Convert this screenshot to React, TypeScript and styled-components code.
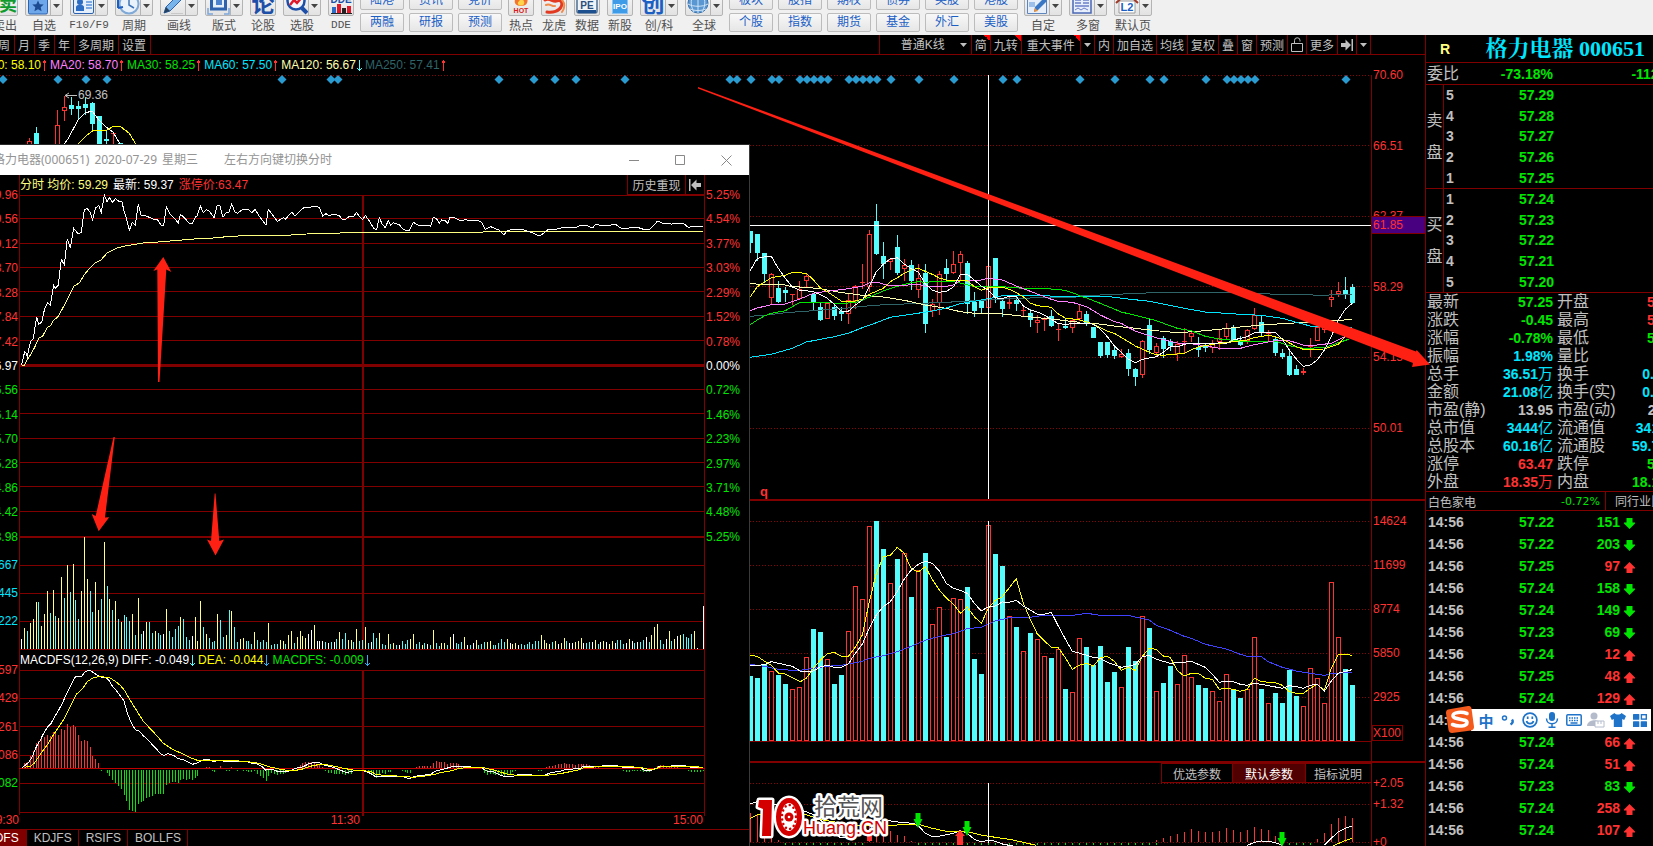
import React from "react";
import styled, { createGlobalStyle, css } from "styled-components";

const C = {
  bg: "#000000",
  line: "#800000",
  text: "#c0c0c0",
  red: "#ff3232",
  green: "#00e600",
  cyan: "#00e6ff",
  bar: "#54fcfc",
  pale: "#ffff80",
  yellow: "#ffff00",
  white: "#ffffff",
  pink: "#ff80ff",
  cream: "#ffffb0",
  teal: "#2f6468",
  mark: "#ff2014",
};

const GlobalStyle = createGlobalStyle`
  * { box-sizing: border-box; }
  body {
    margin: 0;
    background: ${C.bg};
    font-family: "Liberation Sans", "Noto Sans CJK SC", sans-serif;
    font-size: 12px;
    color: ${C.text};
  }
  button, select { font: inherit; color: inherit; background: none; border: 0; padding: 0; margin: 0; }
  a { color: inherit; text-decoration: none; }
  svg { display: block; }
`;

/* ---------- page frame ---------- */

const Page = styled.div`
  position: relative;
  display: flex;
  flex-direction: column;
  min-height: 100vh;
  overflow: hidden;
`;

const Body = styled.div`
  display: flex;
  flex: 1;
`;

const Main = styled.main`
  position: relative;
  display: flex;
  flex-direction: column;
  flex: 1;
  min-width: 0;
  overflow: hidden;
`;

/* ---------- top toolbar ---------- */

const Toolbar = styled.header`
  display: flex;
  align-items: flex-end;
  gap: 7px;
  height: 35px;
  padding-bottom: 1px;
  background: #f0f0f0;
  overflow: hidden;
`;

const Tool = styled.div<{ $cut?: boolean }>`
  display: flex;
  flex-direction: column;
  align-items: center;
  flex: none;
  margin-left: ${(p) => (p.$cut ? "-8px" : "0")};
`;

const ToolKeys = styled.div`
  display: flex;
  height: 26px;
  border: 1px solid #b4b4b4;
  border-radius: 2px;
  background: linear-gradient(#fafafa, #e2e2e2);
`;

const ToolKey = styled.button`
  width: 24px;
  height: 24px;
`;

const ToolMore = styled.button`
  display: flex;
  align-items: center;
  justify-content: center;
  width: 12px;
  padding-top: 6px;
  border-left: 1px solid #b4b4b4;
`;

const ToolLabel = styled.span<{ $latin?: boolean }>`
  height: 18px;
  margin: 0 -2px;
  line-height: 18px;
  font-size: ${(p) => (p.$latin ? "11px" : "12px")};
  font-family: ${(p) => (p.$latin ? '"Liberation Mono", monospace' : '"Noto Sans CJK SC", sans-serif')};
  color: #505050;
  white-space: nowrap;
`;

const KeyGrid = styled.div<{ $cols: number }>`
  display: grid;
  grid-template-columns: repeat(${(p) => p.$cols}, 44px);
  grid-auto-rows: 19px;
  gap: 3px 5px;
  margin: 0 -1px 2px;
  flex: none;
`;

const GridKey = styled.button`
  border: 1px solid #bcbcbc;
  border-radius: 2px;
  background: linear-gradient(#f8f8f8, #e6e6e6);
  color: #1c5fc4;
  font-size: 12px;
  line-height: 17px;
`;

/* ---------- period / option row ---------- */

const MenuRow = styled.nav`
  display: flex;
  justify-content: space-between;
  flex: none;
  height: 20px;
  border-bottom: 1px solid ${C.line};
  padding-right: 54px;
`;

const MenuSide = styled.div<{ $cut?: boolean }>`
  display: flex;
  margin-left: ${(p) => (p.$cut ? "-6px" : "0")};
  border-left: 1px solid ${C.line};
`;

const MenuKey = styled.button<{ $flag?: boolean; $pad?: string }>`
  display: flex;
  align-items: center;
  justify-content: center;
  padding: ${(p) => p.$pad ?? "0 3px"};
  border-right: 1px solid ${C.line};
  white-space: nowrap;
  ${(p) =>
    p.$flag &&
    css`
      background: linear-gradient(45deg, transparent 50%, #ff0000 50%) top right / 6px 6px no-repeat;
    `}
`;

const LinePicker = styled.label`
  display: flex;
  align-items: center;
  justify-content: flex-end;
  gap: 14px;
  width: 92px;
  padding-right: 4px;
  border-right: 1px solid ${C.line};
`;

const PlainSelect = styled.select`
  appearance: none;
  outline: none;
`;

/* ---------- legends ---------- */

const Legend = styled.div<{ $cut?: boolean }>`
  display: flex;
  align-items: center;
  flex: none;
  gap: 3px;
  height: 20px;
  padding-left: ${(p) => (p.$cut ? "0" : "60px")};
  margin-left: ${(p) => (p.$cut ? "-27px" : "0")};
  white-space: nowrap;
`;

const LegendItem = styled.span<{ $c: string }>`
  display: flex;
  align-items: center;
  gap: 1px;
  color: ${(p) => p.$c};
`;

/* ---------- chart panes ---------- */

const Pane = styled.section<{ $h: number; $rule?: boolean }>`
  display: flex;
  flex: none;
  height: ${(p) => p.$h}px;
  border-top: ${(p) => (p.$rule ? `2px solid ${C.line}` : "0")};
`;

const Plot = styled.div<{ $h: number }>`
  flex: 1;
  min-width: 0;
  border-right: 1px solid ${C.line};
  svg.plot { width: 100%; height: ${(p) => p.$h}px; }
`;

const Axis = styled.div`
  position: relative;
  display: flex;
  flex-direction: column;
  width: 53px;
  flex: none;
`;

const Ticks = styled.div<{ $h: number; $top?: number; $right?: boolean }>`
  display: flex;
  flex-direction: column;
  justify-content: space-between;
  align-items: ${(p) => (p.$right ? "flex-end" : "flex-start")};
  height: ${(p) => p.$h}px;
  margin-top: ${(p) => p.$top ?? -8}px;
  padding: 0 1px;
  flex: none;
`;

const Tick = styled.span<{ $c?: string }>`
  line-height: 16px;
  color: ${(p) => p.$c ?? C.red};
`;

const Cursor = styled.div`
  position: absolute;
  top: 141px;
  left: 0;
  right: 0;
  height: 18px;
  padding-left: 1px;
  line-height: 16px;
  border: 1px solid ${C.line};
  border-width: 1px 0;
  background: #480080;
  color: ${C.red};
`;

const Unit = styled.span`
  width: 31px;
  margin-top: 20px;
  border: 1px solid ${C.line};
  line-height: 14px;
  color: ${C.red};
`;

const ParamTabs = styled.div`
  display: flex;
  justify-content: flex-end;
  height: 20px;
`;

const ParamTab = styled.button<{ $on?: boolean }>`
  padding: 0 ${(p) => (p.$on ? 12 : 11)}px;
  border: 1px solid ${C.line};
  border-right-width: 0;
  background: ${(p) => (p.$on ? "#500000" : "transparent")};
  color: ${(p) => (p.$on ? C.white : C.text)};
  &:last-child { padding: 0 9px 0 8px; }
`;

/* ---------- floating intraday window ---------- */

const Popup = styled.section`
  position: absolute;
  top: 109px;
  bottom: 0;
  left: -40px;
  width: 790px;
  display: flex;
  flex-direction: column;
  border-top: 1px solid #2a2a2a;
  border-right: 1px solid #3a3a3a;
  background: ${C.bg};
  overflow: hidden;
`;

const TitleBar = styled.div`
  display: flex;
  flex: none;
  height: 30px;
  padding-left: 33px;
  background: #ffffff;
  color: #949494;
  font-family: "Noto Sans", "Noto Sans CJK SC", sans-serif;
  line-height: 30px;
`;

const TitleWord = styled.span`
  margin-right: 5px;
`;

const TitleHint = styled.span`
  margin-left: 21px;
  flex: 1;
`;

const WinKey = styled.button`
  display: flex;
  align-items: center;
  justify-content: center;
  width: 46px;
`;

const InfoRow = styled.div`
  display: flex;
  flex: none;
  height: 20px;
  padding: 0 44px 0 59px;
`;

const InfoText = styled.div`
  display: flex;
  gap: 5px;
  flex: 1;
  border-left: 1px solid ${C.line};
  line-height: 20px;
`;

const Tone = styled.span<{ $c: string }>`
  color: ${(p) => p.$c};
`;

const InfoKey = styled.button<{ $w: number }>`
  display: flex;
  align-items: center;
  justify-content: center;
  width: ${(p) => p.$w}px;
  border: 1px solid ${C.line};
  border-width: 0 0 1px 1px;
  &:last-child { border-right-width: 1px; }
`;

const Trio = styled.div<{ $h: number }>`
  display: grid;
  grid-template-columns: 59px 1fr 44px;
  height: ${(p) => p.$h}px;
  flex: none;
  svg.plot { width: 100%; height: ${(p) => p.$h}px; overflow: visible; }
`;

const Hours = styled.div`
  display: grid;
  grid-template-columns: 59px 341px 1fr;
  justify-items: end;
  flex: none;
  height: 17px;
  padding-right: 46px;
  line-height: 17px;
  color: ${C.red};
`;

const IndexTabs = styled.div`
  display: flex;
  flex: none;
  height: 17px;
  border-top: 1px solid ${C.line};
`;

const IndexTab = styled.button<{ $on?: boolean }>`
  padding: 0 6px 0 7px;
  height: 16px;
  line-height: 16px;
  border-right: 1px solid ${C.line};
  background: ${(p) => (p.$on ? C.line : "transparent")};
  color: ${(p) => (p.$on ? C.white : C.text)};
  &:first-child { padding: 0 7px 0 8px; }
`;

/* ---------- quote sidebar ---------- */

const Side = styled.aside`
  display: flex;
  flex-direction: column;
  flex: none;
  width: 228px;
  border-left: 1px solid ${C.line};
  overflow: hidden;
`;

const SideHead = styled.div`
  display: flex;
  align-items: center;
  flex: none;
  height: 27px;
  padding: 0 8px 0 14px;
  font-size: 14px;
  font-weight: bold;
  color: ${C.pale};
`;

const StockName = styled.h1`
  flex: 1;
  margin: 0;
  text-align: right;
  white-space: nowrap;
  font: bold 22px/22px "Liberation Serif", "Noto Serif CJK SC", "Noto Sans CJK SC", serif;
  color: ${C.cyan};
`;

const Figure = styled.span<{ $c?: string }>`
  font-size: 14px;
  font-weight: bold;
  text-align: right;
  color: ${(p) => p.$c ?? C.text};
`;

const Unitary = styled.span`
  font-size: 15px;
  font-weight: normal;
`;

const StatGrid = styled.div<{ $row: number }>`
  display: grid;
  grid-template-columns: 72px 54px 77px 52px;
  grid-auto-rows: ${(p) => p.$row}px;
  align-items: center;
  flex: none;
  width: 256px;
  padding-left: 1px;
  border-top: 1px solid ${C.line};
  font-size: 16px;
  line-height: 18px;
  white-space: nowrap;
`;

const StatName = styled.span<{ $second?: boolean }>`
  padding-left: ${(p) => (p.$second ? "4px" : "0")};
`;

const Book = styled.div`
  display: flex;
  flex: none;
  height: 104px;
  border-top: 1px solid ${C.line};
`;

const BookSide = styled.div`
  display: flex;
  flex-direction: column;
  align-items: center;
  justify-content: center;
  gap: 14px;
  width: 18px;
  border-right: 1px solid ${C.line};
  font-size: 16px;
  line-height: 18px;
`;

const BookRows = styled.div`
  display: grid;
  grid-template-rows: repeat(5, 1fr);
  align-items: center;
  width: 110px;
  padding-left: 2px;
`;

const BookRow = styled.div`
  display: flex;
  justify-content: space-between;
`;

const Sector = styled.div`
  display: flex;
  align-items: center;
  justify-content: space-between;
  flex: none;
  height: 20px;
  padding-left: 2px;
  border-top: 1px solid ${C.line};
  border-bottom: 1px solid ${C.line};
  white-space: nowrap;
`;

const SectorMove = styled.span`
  font-family: "DejaVu Sans", sans-serif;
  font-size: 11px;
  margin-left: auto;
  margin-right: 5px;
  color: ${C.green};
`;

const SectorPeers = styled.a`
  align-self: stretch;
  width: 48px;
  padding-left: 9px;
  border-left: 1px solid ${C.line};
  line-height: 20px;
  overflow: hidden;
`;

const DealTable = styled.table`
  width: 209px;
  table-layout: fixed;
  border-collapse: collapse;
  font-size: 14px;
  font-weight: bold;
  td { height: 22px; padding: 0; line-height: 16px; text-align: right; }
  td:first-child { padding-left: 2px; text-align: left; }
  svg { margin: 2px 0 0 auto; }
`;

/* ---------- input method bar ---------- */

const ImeBar = styled.div`
  position: absolute;
  right: 2px;
  bottom: 115px;
  display: flex;
  align-items: center;
  width: 180px;
  height: 22px;
  padding-left: 4px;
  background: #ffffff;
`;

const ImeLogo = styled.div`
  position: absolute;
  left: -26px;
  top: -4px;
`;

const ImeKey = styled.button`
  display: flex;
  align-items: center;
  justify-content: center;
  width: 22px;
  height: 22px;
  color: #1f73c8;
  font-size: 15px;
  font-weight: bold;
`;

const Overlay = styled.svg`
  position: absolute;
  top: 0;
  left: 0;
  pointer-events: none;
`;

const Watermark = styled.svg`
  position: absolute;
  left: 754px;
  bottom: 3px;
`;

/* ---------- chart helpers ---------- */

/* Series are stored in thirds of a pixel from an origin. */
const seg = (ox: number, oy: number, raw: string) =>
  raw
    .trim()
    .split(/\s+/)
    .map((p) => {
      const [x, y] = p.split(",").map(Number);
      return `${(ox + x / 3).toFixed(1)},${(oy + y / 3).toFixed(1)}`;
    })
    .join(" ");

const Line = ({ c, pts }: { c: string; pts: string }) => (
  <polyline points={pts} fill="none" stroke={c} strokeWidth="1" shapeRendering="crispEdges" />
);

const toneOf: Record<string, string> = { y: C.pale, c: C.bar, w: C.white, r: C.red, g: C.green };

const Sticks = ({ ox, oy, base, raw, tone }: { ox: number; oy: number; base: number; raw: string; tone?: string }) => (
  <g shapeRendering="crispEdges">
    {raw
      .trim()
      .split(/\s+/)
      .map((s, i) => {
        const k = tone ?? s[0];
        const [x, y] = (tone ? s : s.slice(1)).split(",").map(Number);
        const end = Math.round(oy + y / 3);
        const top = Math.min(end, base);
        return (
          <rect key={i} x={Math.floor(ox + x / 3)} y={top} width="1" height={Math.max(1, Math.abs(base - end))} fill={toneOf[k]} />
        );
      })}
  </g>
);

const Dots = ({ ys, w }: { ys: number[]; w: number }) => (
  <g stroke="#900000" strokeDasharray="1 2" shapeRendering="crispEdges">
    {ys.map((y) => (
      <line key={y} x1="0" x2={w} y1={y + 0.5} y2={y + 0.5} />
    ))}
  </g>
);

/* ---------- data: daily candles (kind high,top,bottom,low,volume) ---------- */

const CANDLES = `
c123,123,159,189,528 c132,132,189,213,534 c189,189,252,276,492 r250,252,324,346,513 c273,294,336,339,525
c291,300,309,336,552 r312,312,315,345,567 r273,297,327,327,561 r252,258,273,291,471 c309,312,339,360,387
c336,351,390,393,396 r336,339,387,387,477 c339,351,378,390,552 c352,363,373,393,525 r309,330,372,402,393
r285,288,333,357,258 r222,276,279,297,297 r120,132,291,306,78 c42,93,192,195,63 c156,198,222,267,147
r204,207,216,240,249 c135,171,249,255,177 r207,225,237,273,159 c210,225,273,300,291 r222,264,300,324,210
c222,249,402,429,159 r327,342,363,381,372 r243,252,339,375,321 c207,234,252,276,411 r183,222,249,252,294
r183,192,219,273,297 c213,219,342,372,261 c306,336,363,381,477 c327,330,354,372,522 r198,228,354,354,75
c204,204,324,339,162 c330,333,357,381,198 r318,336,342,357,348 c318,330,342,363,381 r345,360,363,378,453
c357,369,390,411,399 r375,390,399,429,417 r381,387,390,423,468 c360,378,408,411,474 r400,417,420,453,447
c384,408,414,417,567 r387,390,414,429,576 r345,363,387,393,414 c363,372,402,408,441 c411,411,444,444,495
c456,456,498,504,438 c456,456,495,504,546 c471,480,498,507,516 r477,492,502,504,561 c477,489,537,558,441
c534,537,561,588,483 r450,453,555,564,348 c387,405,480,492,384 r459,468,489,501,573 c438,444,477,504,549
c447,453,468,483,498 r453,462,492,513,552 r414,454,457,492,465 r423,429,441,456,531 c441,471,480,501,555
c462,468,474,486,564 r450,459,474,489,573 r417,444,456,480,603 r399,414,441,450,522 c405,412,453,453,567
c438,453,465,468,594 r417,420,453,462,567 r354,375,417,420,411 c378,396,429,441,567 r420,429,432,453,609
c441,447,489,498,579 c477,489,501,507,609 c480,498,555,558,510 c525,537,555,555,588 r534,543,549,555,618
r444,468,471,501,504 r408,411,453,453,534 r400,405,420,430,609 r300,321,330,351,246 r276,303,312,321,411
c261,300,312,327,507 c282,291,339,342,555`
  .trim()
  .split(/\s+/)
  .map((s, i) => {
    const [h, t, b, l, v] = s.slice(1).split(",").map(Number);
    const y = (n: number) => Math.round(190 + n / 3);
    return { up: s[0] === "r", x: 748 + 7 * i, h: y(h), t: y(t), b: y(b), l: y(l), v: Math.round(500 + v / 3) };
  });

const EARLY = [
  [1, 27, 138, 141, 150, 150], [0, 34, 127, 133, 150, 150], [1, 55, 110, 125, 150, 150], [1, 62, 96, 107, 111, 121],
  [0, 69, 97, 105, 109, 115], [0, 76, 101, 106, 109, 119], [0, 83, 97, 104, 108, 115], [0, 90, 102, 103, 124, 130],
  [0, 97, 116, 116, 150, 150], [0, 104, 130, 139, 141, 150], [1, 111, 132, 133, 134, 150], [0, 118, 143, 143, 150, 150],
].map(([up, x, h, t, b, l]) => ({ up: !!up, x, h, t, b, l, v: 0 }));

const Candle = ({ d }: { d: (typeof CANDLES)[number] }) => {
  const tone = d.up ? C.red : C.bar;
  if (!d.up)
    return (
      <g fill={tone}>
        <rect x={d.x + 2} y={d.h} width="1" height={d.l - d.h} />
        <rect x={d.x} y={d.t} width="5" height={Math.max(1, d.b - d.t)} />
      </g>
    );
  return (
    <g>
      <rect x={d.x + 2} y={d.h} width="1" height={Math.max(0, d.t - d.h)} fill={tone} />
      <rect x={d.x + 2} y={d.b} width="1" height={Math.max(0, d.l - d.b)} fill={tone} />
      {d.b - d.t <= 2 ? (
        <rect x={d.x} y={d.t} width="5" height={d.b - d.t} fill={tone} />
      ) : (
        <rect x={d.x + 0.5} y={d.t + 0.5} width="4" height={d.b - d.t - 1} fill="none" stroke={tone} />
      )}
    </g>
  );
};

const DIAMONDS = [
  3, 58, 86, 107, 282, 331, 338, 499, 534, 555, 576, 625, 730, 737, 751, 772, 779, 800, 807, 814, 821, 828, 849, 856, 863, 870,
  877, 891, 919, 954, 1003, 1017, 1080, 1115, 1150, 1164, 1206, 1227, 1234, 1241, 1248, 1255, 1346,
];

const L = (a: string, b: string, oy = 190) => seg(740, oy, a) + " " + seg(1080, oy, b);

const AVERAGES = [
  [C.teal, L("29,379 80,375 136,368 220,362 325,354 400,346 493,342 619,337 724,331 830,325 1010,321", "0,318 60,315 220,308 380,307 500,310 600,313 740,316 760,313 816,314")],
  [C.cream, L("29,280 64,284 130,284 157,290 199,292 241,296 300,307 367,316 430,321 493,331 556,345 619,355 661,365 703,370 790,372 850,379 934,387 1010,396", "0,399 40,400 103,408 166,415 229,422 292,428 355,424 418,418 481,411 544,405 607,401 691,396 780,391 816,388")],
  [C.cyan, L("29,502 94,493 157,475 199,456 283,440 325,430 367,413 409,398 451,382 514,373 577,363 619,354 661,341 724,330 766,322 787,317 892,317 1010,320", "0,320 80,319 145,327 208,334 313,355 376,366 481,373 544,376 607,385 649,397 691,408 730,411 816,412")],
  [C.green, L("29,405 52,390 73,378 94,370 136,362 178,338 220,337 304,340 346,338 367,331 409,312 430,303 472,289 514,278 535,275 556,277 598,274 640,275 661,279 703,290 745,289 787,290 850,295 934,297 976,301 1010,313", "0,318 20,324 61,340 124,366 187,381 229,392 292,415 334,422 376,439 418,447 481,453 586,453 628,467 670,475 733,473 775,458 806,448")],
  [C.pink, L("29,362 52,354 94,344 136,342 178,328 220,310 262,304 325,296 367,289 388,279 409,276 451,288 493,286 535,283 556,289 619,289 640,285 661,272 724,270 745,265 787,270 829,288 892,312 934,328 955,334 997,337", "0,344 20,350 61,375 103,395 124,400 145,412 166,423 187,430 208,437 250,449 292,459 334,461 376,467 418,475 481,475 523,464 565,456 586,452 628,452 670,465 712,465 754,460 775,449 796,440")],
  [C.yellow, L("29,323 52,290 73,277 94,263 136,256 157,247 199,250 220,269 241,294 262,305 304,333 346,333 367,328 388,313 430,295 451,275 472,263 493,250 514,239 535,235 556,244 577,253 598,264 619,270 661,270 682,272 703,290 724,301 745,293 787,291 808,298 829,308 850,320 871,339 892,347 934,352 955,372 976,384", "0,390 40,402 82,423 103,430 145,455 166,468 208,487 229,494 250,496 292,492 313,490 334,479 355,471 397,463 460,455 502,450 523,443 565,436 586,440 607,447 649,470 670,478 733,477 775,463 796,440")],
  [C.white, L("29,245 52,205 73,201 94,199 115,235 136,265 157,291 178,300 220,305 241,314 262,325 283,343 304,363 325,364 346,345 367,330 388,290 409,245 430,223 451,207 472,203 493,222 514,236 535,246 556,282 577,300 598,307 619,304 640,291 661,254 682,253 703,270 724,288 745,301 766,323 787,326 808,319 829,319 850,348 871,360 892,366 913,375 934,388 955,401 976,403", "0,399 20,399 40,403 61,417 82,440 103,468 124,487 145,507 166,518 187,508 229,500 250,487 271,470 292,471 313,463 334,460 397,462 418,458 439,460 460,450 502,440 523,428 586,427 607,447 628,480 649,507 670,529 691,525 712,510 733,480 754,440 775,390 796,358 817,340")],
];

const VOLUME_LINES = [
  ["#4040ff", L("29,493 73,499 115,508 157,511 181,511 220,505 262,499 304,496 346,488 367,484 388,475 430,467 472,455 514,439 556,421 598,409 640,401 682,386 724,382 766,363 808,353 871,352 913,346 1000,346", "0,343 20,340 61,346 145,346 166,351 208,360 229,376 271,391 313,409 334,415 376,433 439,447 481,463 502,469 544,470 565,485 607,502 649,513 691,520 733,526 754,521 815,517", 500)],
  [C.yellow, L("29,466 52,469 73,483 94,496 115,519 136,522 157,533 181,545 199,535 220,505 241,480 262,461 283,457 304,469 325,469 346,442 367,405 388,305 409,220 430,170 451,166 472,142 493,160 514,207 535,216 556,200 577,238 598,270 619,294 640,312 661,340 682,321 703,350 724,370 745,325 766,301 787,290 808,263 829,236 850,309 871,358 892,402 913,423 934,441 955,443 976,473 997,508 1018,496", "0,495 20,490 40,498 61,474 82,469 103,484 124,511 145,502 166,511 187,469 208,445 229,448 250,468 271,472 292,512 313,528 334,520 355,520 376,535 397,538 418,568 439,565 460,568 481,574 502,568 523,535 544,545 586,548 607,556 628,575 649,580 670,580 691,565 712,553 733,572 754,505 775,463 796,463 815,466", 500)],
  [C.white, L("29,498 73,494 94,485 157,499 181,513 220,513 241,501 262,496 283,502 304,502 325,492 346,460 367,433 388,385 409,345 430,320 451,305 472,274 493,237 514,210 535,193 556,184 577,190 598,213 619,250 640,265 661,271 682,280 703,310 724,333 745,320 766,318 787,306 808,307 829,301 850,318 871,330 892,343 913,343 934,337 955,378 976,417 997,454", "0,460 20,466 40,472 61,475 82,487 124,502 145,499 166,493 187,470 208,466 229,478 271,490 313,487 334,484 355,493 376,502 397,523 418,547 439,543 460,545 481,553 502,556 523,550 544,553 607,565 628,557 649,560 670,565 691,556 712,553 733,574 754,543 775,520 796,514 815,509", 500)],
];

/* ---------- data: intraday window ---------- */

const PRICE =
  seg(0, 170, "65,585 68,570 74,545 78,550 82,560 88,530 92,514 100,506 105,470 110,442 116,463 125,457 134,415 143,398 151,406 157,370 161,346 166,355 175,346 184,268 193,284 202,206 211,233 221,175 235,192 244,187 253,119 262,115 270,127 278,149 286,115 296,106 304,127 313,76 321,95 328,82 338,98 346,85 358,95 366,95 371,119 379,145 388,181 397,157 406,166 415,103 424,138 436,137 448,142 460,148 472,148 484,167 491,165 499,110 510,132 525,147 535,160 541,133 550,140 568,160 577,160 586,142 592,137 601,108 610,128 619,119 628,123 642,143 652,105 660,108 669,142 678,128 686,128 695,103 705,126 712,130 727,119 746,119 755,128 765,118 780,142 798,166 805,118 818,135 832,154 842,148 850,143 856,148 865,138 876,126 884,137 892,132 905,117 915,112 950,110 958,112 968,138 978,131 986,137 1002,133 1018,137 1028,149 1036,149 1048,139 1062,138 1069,127 1077,138 1088,149 1096,136 1106,150 1122,176 1130,178 1138,142") +
  " " +
  seg(370, 140, "28,233 37,253 46,263 55,241 62,255 70,248 88,254 98,267 107,271 118,271 124,260 130,247 145,256 178,256 182,259 190,232 200,237 208,250 215,240 226,242 233,250 240,232 250,232 262,238 274,243 286,238 298,243 322,241 335,247 345,268 362,260 374,265 386,270 402,284 412,272 426,268 456,268 474,274 490,279 502,286 512,286 525,276 535,268 550,270 566,266 582,262 616,264 630,257 654,258 668,264 676,253 690,256 724,255 738,254 750,263 764,266 790,262 806,263 820,268 838,270 850,257 862,244 872,247 882,252 895,250 905,253 912,250 940,250 955,262 970,259 998,259");

const MEAN =
  seg(0, 170, "65,586 74,585 80,572 92,553 104,532 116,505 128,498 142,473 152,466 160,452 176,438 185,420 196,400 206,380 221,349 238,339 252,315 266,298 286,279 304,269 322,248 352,234 380,227 430,219 488,215 545,210 595,206 640,204 680,200 730,197 860,196 920,192 1000,190 1070,187 1140,187") +
  " " +
  seg(370, 140, "338,277 340,274 998,274");

const TRADES_A = "w65,417 y74,384 c83,393 y92,369 y101,357 y110,306 c116,306 y125,378 y134,342 y143,273 c152,339 y161,270 c167,348 y176,354 y185,231 c194,294 y203,195 c212,276 y221,192 c227,300 c236,357 y245,273 y254,111 y263,237 c272,273 c278,336 y287,246 y296,330 c305,297 y314,126 c323,258 y329,297 c338,330 y347,303 c356,357 y365,366 c374,345 c380,351 c389,363 y398,342 c407,405 y416,294 c425,402 w431,393 y440,366 c449,366 c458,399 y467,393 c476,399 c482,405 w491,402 y500,327 c509,393 c518,411 c527,387 c536,378 y542,351 c551,357 c560,411 c569,420 w578,408 y587,351 y593,423 y602,303 c611,381 y620,402 c629,414 c638,426 c644,423 y653,342 c662,360 c671,411 y680,405 c689,330 y695,333 c704,381 c713,426 y722,417 y731,414 c740,423 c746,423 c755,432 y764,396 c773,420 c782,426 c791,420 c800,426 y806,369 c815,435 c824,432 c833,432 y842,420 y851,423 c857,432 y866,405 y875,393 c884,429 y893,411 y902,393 y908,408 y917,414 w926,402 w935,390 y944,375 w953,423 w959,423 w968,423 c977,426 w986,429 c995,426 w1004,426 c1010,417 y1019,396 c1028,417 c1037,399 y1046,420 y1055,420 c1061,426 y1070,387 c1079,423 c1088,420 y1097,381 c1106,429 w1115,426 c1121,399 c1130,414 y1139,399";
const TRADES_B = "c10,339 c19,354 y28,339 c37,372 c46,375 y55,342 c61,372 y70,369 c79,375 w88,375 c97,363 c106,372 c112,360 y121,357 y130,342 c139,372 c148,366 y157,375 c163,369 w172,372 c181,375 y190,330 c199,369 c208,378 y214,369 y223,369 c232,375 y241,351 w250,342 c259,369 c265,372 c274,366 y283,351 w292,375 c301,375 w310,369 y319,360 c325,375 c334,372 c343,366 y352,366 y361,363 c370,375 c376,375 c385,369 c394,357 c403,366 y412,357 w421,369 y427,372 y436,369 w445,375 c454,372 c463,375 c472,372 c478,366 c487,372 c496,363 c505,363 y514,345 y523,360 y529,369 y538,372 c547,366 y556,363 w565,372 y574,369 y583,354 c589,363 w598,369 w607,369 y616,366 y625,363 y634,354 w640,369 c649,369 c658,366 w667,366 y676,360 c685,372 w691,366 y700,363 w709,366 y718,372 y727,363 w736,369 c742,360 c751,360 c760,372 w769,369 y778,357 w787,363 c793,369 w802,366 c811,366 c820,360 w829,351 c838,366 y844,345 y853,321 y862,312 c871,360 c880,372 w889,357 y898,333 c904,363 y913,357 w922,348 y931,345 c940,342 c949,351 c955,354 c964,342 y973,333 w982,384 w1000,258";

const DIFF =
  seg(0, 500, "65,803 74,797 86,787 95,773 100,762 110,738 120,722 130,702 142,682 152,672 165,648 176,630 188,608 200,580 212,556 224,532 232,529 246,528 254,517 266,511 272,512 280,518 292,525 304,531 318,534 326,540 338,560 350,573 364,592 372,602 376,618 384,645 394,668 406,689 416,692 430,707 446,722 462,740 472,750 484,763 492,766 504,761 522,767 534,776 550,779 565,786 577,793 590,790 610,779 628,779 643,785 654,781 668,783 700,783 716,785 740,785 754,789 770,791 786,800 797,810 818,808 834,815 860,816 875,810 893,803 910,800 925,792 945,786 960,789 975,796 1000,802 1018,809 1040,818 1062,812 1090,812 1105,817 1125,828") +
  " " +
  seg(370, 520, "12,768 30,769 46,771 70,768 100,770 118,776 130,771 150,766 180,764 195,754 220,748 245,740 290,739 310,742 335,744 350,753 372,756 390,765 402,769 430,769 440,765 480,764 505,768 520,767 540,759 572,753 590,748 630,746 640,739 690,741 700,737 740,737 760,742 812,744 824,751 845,751 860,744 868,739 895,740 910,736 945,737 965,742 998,742");
const DEA =
  seg(0, 500, "74,802 92,799 104,788 115,772 130,750 144,732 160,705 176,681 190,660 208,626 220,601 230,582 248,565 262,545 280,533 296,530 312,531 330,534 345,543 362,557 374,572 386,593 400,616 415,640 430,664 446,681 466,702 490,730 516,747 544,760 566,771 592,781 650,781 700,781 716,783 760,787 784,792 806,800 828,805 845,809 880,812 905,808 930,799 960,793 985,795 1010,800 1030,805 1060,810 1090,812 1115,815") +
  " " +
  seg(370, 520, "15,762 40,766 100,769 130,772 165,768 190,764 210,758 240,753 265,746 300,741 340,743 375,751 410,762 440,766 530,766 570,761 600,755 625,750 645,742 700,740 770,739 815,743 835,748 855,747 870,741 930,739 980,740 998,743");

const HOT_A = "74,790 83,786 92,768 101,752 110,729 116,722 125,718 134,711 143,705 152,708 161,696 167,699 176,705 185,688 194,690 203,672 212,681 221,675 227,681 236,705 245,723 254,720 263,723 272,741 278,768 287,777 296,789 620,801 629,801 662,798 695,801 893,800 902,795 908,790 917,787 926,786 935,786 944,788 953,792 959,796 968,800";
const HOT_B = "139,742 148,738 157,738 163,738 172,738 181,738 190,729 199,723 208,726 214,726 223,726 232,732 241,729 250,729 259,729 265,732 274,738 283,738 292,739 301,741 529,741 538,738 547,738 556,735 565,732 574,732 583,729 589,732 598,732 607,732 616,735 625,732 634,732 640,732 649,732 658,735 667,738 676,738 685,739 862,738 871,736 880,736 889,738 898,738 904,738 913,739 922,741";
const COLD_A = "305,813 323,819 329,828 338,840 347,849 356,858 365,867 374,885 380,903 389,930 398,933 407,936 416,912 425,906 431,903 440,894 449,891 458,888 467,882 476,882 482,882 491,882 500,855 509,849 518,846 527,846 536,849 542,840 551,837 560,840 569,837 578,840 587,834 593,828 638,813 644,816 680,813 689,813 713,813 731,813 740,813 746,816 755,816 764,813 773,822 782,828 791,834 800,843 806,828 815,819 824,822 833,825 842,822 851,822 857,819 866,813 977,813 986,819 995,820 1004,822 1010,823 1019,822 1028,823 1037,825 1046,822 1055,822 1070,813 1079,813 1097,813 1106,819 1115,822 1121,825 1130,833";
const COLD_B = "10,768 19,774 28,765 37,759 46,762 55,756 61,756 97,753 106,756 112,759 121,759 343,759 352,765 361,762 370,762 376,765 385,766 394,768 403,771 412,762 421,762 427,756 436,753 505,753 514,753 760,754 769,756 778,756 787,753 793,753 802,753 811,753 820,756 829,756 838,756 844,753 955,753 964,755 973,755 982,755 991,755 1000,753";

const PRICE_GRID = [218, 243, 267, 291, 316, 340, 389, 413, 438, 462, 486, 511, 565, 593, 621, 649];
const LEFT_PRICES = ["59.96", "59.56", "59.12", "58.70", "58.28", "57.84", "57.42", "56.97", "56.56", "56.14", "55.70", "55.28", "54.86", "54.42", "53.98"];
const RIGHT_RATES = ["5.25%", "4.54%", "3.77%", "3.03%", "2.29%", "1.52%", "0.78%", "0.00%", "0.72%", "1.46%", "2.23%", "2.97%", "3.71%", "4.48%", "5.25%"];
const tickTone = (i: number) => (i < 7 ? C.red : i === 7 ? C.white : C.green);

/* ---------- small drawings ---------- */

const Caret = ({ c = C.text }: { c?: string }) => (
  <svg width="7" height="4" viewBox="0 0 7 4">
    <path d="M0 0h7L3.500 4z" fill={c} />
  </svg>
);

const Trend = ({ up, blue }: { up?: boolean; blue?: boolean }) => (
  <svg width="5" height="13" viewBox="0 0 5 13" shapeRendering="crispEdges" stroke={up ? C.red : blue ? "#30b0f0" : C.bar} fill="none">
    <path d={up ? "M2.500 12V1M.5 4.500l2-3 2 3" : "M2.500 1v11M.5 9.500l2 2 2-2"} />
  </svg>
);

const DealArrow = ({ up }: { up: boolean }) => (
  <svg width="11" height="11" viewBox="0 0 11 11">
    <path d={up ? "M5.500 0L11 5.500v1H8.500V11h-6V6.500H0v-1z" : "M2.500 0h6v4.500H11v1L5.500 11 0 5.500v-1h2.500z"} fill={up ? C.red : C.green} />
  </svg>
);

const LockIcon = () => (
  <svg width="12" height="15" viewBox="0 0 12 15" fill="none" stroke={C.text}>
    <path d="M.5 6.500h11v8H.5zM3.500 6.500v-3a2.500 2.500 0 0 1 5.500 0v1" />
  </svg>
);

const JumpIcon = ({ back }: { back?: boolean }) => (
  <svg width="12" height="12" viewBox="0 0 12 12" fill={C.text} transform={back ? "scale(-1 1)" : undefined}>
    <path d="M0 4h4.500V.5L10 6l-5.500 5.500V8H0zM10.500 0H12v12h-1.500z" />
  </svg>
);

const iconText = { fontWeight: 700, textAnchor: "middle" as const };

const icons: Record<string, React.ReactNode> = {
  sell: <text x="15" y="20" fontSize="18" fill="#0f9a2c" {...iconText}>卖</text>,
  star: (
    <>
      <rect x="2.500" y="0" width="19" height="23" rx="1.500" fill="#6fa8ea" stroke="#2c62ae" />
      <rect x="4" y="1" width="16" height="6" fill="#a5cbf6" />
      <path d="M12 9.500l1.700 3.700 4 .4-3 2.700.9 4L12 18.200l-3.600 2.100.9-4-3-2.700 4-.4z" fill="#1c4b92" />
    </>
  ),
  card: (
    <>
      <rect x="2.500" y="2" width="20" height="20.500" rx="1.500" fill="#e4effb" stroke="#2c62ae" />
      <path d="M5 20v-4c0-3 8-3 8 0v4z" fill="#2b6cc4" />
      <circle cx="9" cy="11" r="3" fill="#2b6cc4" />
      <path d="M15 11h6M15 14h6M15 17h6" stroke="#5a93da" strokeWidth="1.500" />
    </>
  ),
  clock: (
    <>
      <circle cx="13" cy="13" r="9.500" fill="#e9f2fb" stroke="#7fa9d6" strokeWidth="2" />
      <path d="M13 6v8l5 3" fill="none" stroke="#3c74b8" strokeWidth="1.500" />
      <path d="M2 8v9M2 17l5-1" fill="none" stroke="#1c5fc4" strokeWidth="2" />
    </>
  ),
  pencil: (
    <>
      <path d="M3 22l2-6L18 3l4 4L9 20z" fill="#78b4ea" stroke="#2c62ae" />
      <path d="M3 22l2-6 4 4z" fill="#24405e" />
      <path d="M10 22.500h12" stroke="#c8c8c8" />
    </>
  ),
  screen: (
    <>
      <rect x="5.500" y="2" width="14" height="16" fill="#e6f0fb" stroke="#2c62ae" strokeWidth="3" />
      <rect x="10" y="8" width="6" height="6" fill="#4c83cc" />
      <path d="M2 17v6h5M23 17v6h-5" fill="none" stroke="#7da6dc" strokeWidth="1.500" />
    </>
  ),
  talk: <text x="12" y="21" fontSize="23" fill="#1d4fa8" {...iconText}>论</text>,
  pick: (
    <>
      <circle cx="12" cy="10" r="8.500" fill="#f2f6fc" stroke="#1d4fa8" strokeWidth="2.500" />
      <path d="M18 17l5 5" stroke="#1d4fa8" strokeWidth="4" />
      <path d="M6 14l4-5 3 3 5-6" fill="none" stroke="#e0182a" strokeWidth="2.500" />
    </>
  ),
  dde: (
    <>
      <text x="12" y="12" fontSize="10" fill="#1d4fa8" {...iconText}>DDE</text>
      <path d="M3 16h4v6H3z" fill="#2b6cc4" />
      <path d="M8 13h4v9H8zM18 15h4v7h-4z" fill="#e0182a" />
      <path d="M13 17h4v5h-4z" fill="#222" />
      <path d="M2 22.500h21" stroke="#222" />
    </>
  ),
  hot: (
    <>
      <path d="M12 1c4 4 8 6 6 11-1 4-11 4-12 0-1-3 1-5 2-7 1 1 2 1 2 3 2-2 2-4 2-7z" fill="#f4742c" />
      <path d="M12 7c2 2 4 3 3 6-1 2-5 2-6 0s2-3 3-6z" fill="#ffd34c" />
      <text x="12" y="22" fontSize="7" fill="#d81c1c" {...iconText}>HOT</text>
    </>
  ),
  dragon: (
    <g fill="none" strokeLinecap="round">
      <path d="M3 9c5-3 8 3 12 1s6 2 4 6-8 6-14 5" stroke="#e23a22" strokeWidth="3" />
      <path d="M4 14c4-2 6 2 9 1M20 9c3 3 3 8 0 12" stroke="#f08a4a" strokeWidth="2" />
    </g>
  ),
  pe: (
    <>
      <rect x="2" y="2" width="20" height="20" rx="2" fill="#eef3f8" stroke="#4f6f92" strokeWidth="1.500" />
      <path d="M3 20.500h18" stroke="#1e4f8e" strokeWidth="3" />
      <text x="12" y="18" fontSize="10" fill="#2d4f7c" {...iconText}>PE</text>
    </>
  ),
  ipo: (
    <>
      <rect x="4.500" y="2" width="15" height="20.500" fill="#3d9be8" stroke="#8cc3f2" />
      <text x="12" y="18" fontSize="8" fill="#ffffff" {...iconText}>IPO</text>
    </>
  ),
  create: <text x="12" y="21" fontSize="23" fill="#1c5fc4" {...iconText}>创</text>,
  globe: (
    <>
      <circle cx="12" cy="12" r="10" fill="#5a96d2" stroke="#3a72ac" />
      <path d="M2 13c5 3 15 3 20 0M4 18c5 2 11 2 16 0M12 2v20M7 4c-3 6-2 12 1 17M17 4c3 6 2 12-1 17" fill="none" stroke="#cfe4f6" />
    </>
  ),
  edit: (
    <>
      <path d="M2.500 2h19v20.500h-19z" fill="#e6effa" stroke="#5d86bd" />
      <path d="M4 11h6v5H4zM4 4h6v5H4z" fill="#9dc0ea" />
      <path d="M9 21l1-5L19 7l3 3-9 9z" fill="#3a78c6" />
      <path d="M9 21l1-4 3 3z" fill="#f09030" />
    </>
  ),
  windows: (
    <>
      <rect x="3" y="1" width="18" height="21" fill="#e8effc" stroke="#4a67b4" strokeWidth="1.500" />
      <path d="M5 9h6M13 9h6M5 12h6M13 12h6M5 15h14" stroke="#6b7fc8" strokeWidth="1.500" />
      <path d="M5 19l3-2 3 2 3-2 4 2" fill="none" stroke="#6b7fc8" />
    </>
  ),
  home: (
    <>
      <path d="M4 10h16v12H4z" fill="#ffffff" stroke="#9a9a9a" />
      <path d="M1 12L12 2l11 10" fill="none" stroke="#a03828" strokeWidth="2" />
      <text x="12" y="20" fontSize="11" fill="#1c5fc4" {...iconText}>L2</text>
    </>
  ),
};

type ToolSpec = { icon: string; label: string; more?: boolean; latin?: boolean; cut?: boolean };

const ToolItem = ({ icon, label, more, latin, cut }: ToolSpec) => (
  <Tool $cut={cut}>
    <ToolKeys>
      <ToolKey aria-label={label}>
        <svg width="24" height="24" viewBox="0 0 24 24">{icons[icon]}</svg>
      </ToolKey>
      {more && (
        <ToolMore aria-label={label + "选项"}>
          <Caret c="#444" />
        </ToolMore>
      )}
    </ToolKeys>
    <ToolLabel $latin={latin}>{label}</ToolLabel>
  </Tool>
);

const TOOLS_A: ToolSpec[] = [
  { icon: "sell", label: "卖出", cut: true },
  { icon: "star", label: "自选", more: true },
  { icon: "card", label: "F10/F9", more: true, latin: true },
  { icon: "clock", label: "周期", more: true },
  { icon: "pencil", label: "画线", more: true },
  { icon: "screen", label: "版式", more: true },
  { icon: "talk", label: "论股" },
  { icon: "pick", label: "选股", more: true },
  { icon: "dde", label: "DDE", latin: true },
];
const TOOLS_B: ToolSpec[] = [
  { icon: "hot", label: "热点" },
  { icon: "dragon", label: "龙虎" },
  { icon: "pe", label: "数据" },
  { icon: "ipo", label: "新股" },
  { icon: "create", label: "创/科", more: true },
  { icon: "globe", label: "全球", more: true },
];
const TOOLS_C: ToolSpec[] = [
  { icon: "edit", label: "自定", more: true },
  { icon: "windows", label: "多窗", more: true },
  { icon: "home", label: "默认页", more: true },
];
const KEYS_A = ["陆港", "资讯", "竞价", "两融", "研报", "预测"];
const KEYS_B = ["板块", "股指", "期权", "债券", "英股", "港股", "个股", "指数", "期货", "基金", "外汇", "美股"];

/* ---------- sections ---------- */

const TopToolbar = () => (
  <Toolbar>
    {TOOLS_A.map((t) => <ToolItem key={t.icon} {...t} />)}
    <KeyGrid $cols={3}>{KEYS_A.map((k) => <GridKey key={k}>{k}</GridKey>)}</KeyGrid>
    {TOOLS_B.map((t) => <ToolItem key={t.icon} {...t} />)}
    <KeyGrid $cols={6}>{KEYS_B.map((k) => <GridKey key={k}>{k}</GridKey>)}</KeyGrid>
    {TOOLS_C.map((t) => <ToolItem key={t.icon} {...t} />)}
  </Toolbar>
);

const Menu = () => (
  <MenuRow>
    <MenuSide $cut>
      {["周", "月", "季", "年", "多周期", "设置"].map((k) => <MenuKey key={k} $pad="0 4px 0 3px">{k}</MenuKey>)}
    </MenuSide>
    <MenuSide>
      <LinePicker>
        <PlainSelect aria-label="K线类型" defaultValue="普通K线"><option>普通K线</option></PlainSelect>
        <Caret />
      </LinePicker>
      <MenuKey $flag>简</MenuKey>
      <MenuKey $flag>九转</MenuKey>
      <MenuKey $flag $pad="0 5px">重大事件</MenuKey>
      <MenuKey aria-label="事件选项"><Caret /></MenuKey>
      {["内", "加自选", "均线", "复权", "叠", "窗", "预测"].map((k) => <MenuKey key={k}>{k}</MenuKey>)}
      <MenuKey aria-label="锁定"><LockIcon /></MenuKey>
      <MenuKey>更多</MenuKey>
      <MenuKey aria-label="跳到最新"><JumpIcon /></MenuKey>
      <MenuKey aria-label="更多选项"><Caret /></MenuKey>
    </MenuSide>
  </MenuRow>
);

const PricePane = () => (
  <Pane $h={424}>
    <Plot $h={424}>
      <svg className="plot" viewBox="0 75 1371 424" preserveAspectRatio="xMaxYMin meet">
        <Dots ys={[75, 145, 216, 286, 357, 428]} w={1371} />
        <g fill="#2a9bd0">
          {DIAMONDS.map((x) => <path key={x} d={`M${x - 4.5} 79.500l4.500-4.500 4.500 4.500-4.500 4.500z`} />)}
        </g>
        <g shapeRendering="crispEdges">
          {EARLY.map((d) => <Candle key={d.x} d={d} />)}
          {CANDLES.map((d) => <Candle key={d.x} d={d} />)}
        </g>
        <Line c={C.white} pts="64,144 68,139 78,120 85,113 92,111 99,120 106,127 113,132 120,144" />
        <Line c={C.yellow} pts="77,145 86,136 94,130 102,131 107,130 114,126 121,127 129,133 134,141 136,145" />
        <path d="M65 95.500h12M69 93l-4 2.500 4 2.500" stroke={C.text} fill="none" />
        <text x="78" y="99" fontSize="12" fill={C.text}>69.36</text>
        {AVERAGES.map(([c, p]) => <Line key={c} c={c} pts={p} />)}
        <g fill={C.white}>
          <rect x="749" y="225" width="622" height="1" />
          <rect x="988" y="75" width="1" height="424" />
        </g>
        <text x="760" y="496" fontSize="13" fontWeight="700" fill={C.red}>q</text>
      </svg>
    </Plot>
    <Axis>
      <Ticks $h={369}>
        {["70.60", "66.51", "62.37", "58.29", "54.15", "50.01"].map((t) => <Tick key={t}>{t}</Tick>)}
      </Ticks>
      <Cursor>61.85</Cursor>
    </Axis>
  </Pane>
);

const VolumePane = () => (
  <Pane $h={262} $rule>
    <Plot $h={260}>
      <svg className="plot" viewBox="0 501 1371 260" preserveAspectRatio="xMaxYMin meet">
        <Dots ys={[521, 565, 609, 653, 697]} w={1371} />
        <g shapeRendering="crispEdges">
          <rect x="0" y="741" width="1371" height="1" fill={C.line} />
          {CANDLES.map((d) =>
            d.up ? (
              <rect key={d.x} x={d.x + 0.5} y={d.v + 0.5} width="4" height={740 - d.v} fill="#000" stroke={C.red} />
            ) : (
              <rect key={d.x} x={d.x} y={d.v} width="5" height={741 - d.v} fill={C.bar} />
            )
          )}
        </g>
        {VOLUME_LINES.map(([c, p]) => <Line key={c} c={c} pts={p} />)}
        <rect x="988" y="521" width="1" height="220" fill={C.white} />
      </svg>
    </Plot>
    <Axis>
      <Ticks $h={192} $top={12}>
        {["14624", "11699", "8774", "5850", "2925"].map((t) => <Tick key={t}>{t}</Tick>)}
      </Ticks>
      <Unit>X100</Unit>
    </Axis>
  </Pane>
);

const greenTicks = [
  ...Array.from({ length: 12 }, (_, i) => 785 + 7 * i),
  ...Array.from({ length: 35 }, (_, i) => 918 + 7 * i),
  1289, 1296, 1303, 1310,
];

const Signal = ({ x, y, up }: { x: number; y: number; up?: boolean }) => (
  <path
    d={up ? `M${x} ${y}l5 6-2 0v9h-6v-9h-2z` : `M${x - 2.5} ${y}h5v6h2l-4.500 9-4.500-9h2z`}
    fill={up ? C.red : C.green}
  />
);

const MacdPane = () => (
  <Pane $h={85} $rule>
    <Plot $h={63}>
      <ParamTabs>
        <ParamTab>优选参数</ParamTab>
        <ParamTab $on>默认参数</ParamTab>
        <ParamTab>指标说明</ParamTab>
      </ParamTabs>
      <svg className="plot" viewBox="0 783 1371 63" preserveAspectRatio="xMaxYMin meet">
        <Dots ys={[783, 804, 842]} w={1371} />
        <Sticks ox={740} oy={500} base={842} tone="r" raw="31,939 52,942 73,945 94,960 115,1020 388,960 409,975 430,980 451,993 472,1005 493,1008 514,1023" />
        <Sticks ox={1080} oy={500} base={842} tone="r" raw="229,1020 250,1014 271,1008 292,1002 313,996 334,987 355,993 376,996 397,996 418,993 439,984 460,990 481,996 502,990 523,981 544,987 565,990 586,1008 712,1017 733,999 754,972 775,954 796,948 817,954" />
        <g fill={C.green} shapeRendering="crispEdges">
          {greenTicks.map((x) => <rect key={x} x={x} y="843" width="1" height="2" />)}
        </g>
        <Line c={C.white} pts={seg(740, 500, "29,912 52,905 160,920 230,948 270,990 300,1012 325,1015 370,1000 447,962 480,967 520,970 540,982 556,1000 577,1010 600,1008 640,1000 661,992 682,1000 703,1018 724,1026 745,1020 766,1024 790,1033 820,1038")} />
        <Line c={C.yellow} pts={seg(740, 500, "29,956 52,944 160,940 200,945 250,960 340,975 447,978 472,975 535,973 577,985 619,994 682,995 724,1005 766,1012 808,1018 850,1027 888,1036")} />
        <Line c={C.white} pts={seg(1080, 500, "500,1037 523,1027 544,1023 565,1024 586,1028 607,1036")} />
        <Line c={C.white} pts={seg(1080, 500, "733,1036 754,1015 775,995 796,985 817,978")} />
        <Line c={C.yellow} pts={seg(1080, 500, "760,1037 790,1024 817,1015")} />
        <Signal x={918} y={813} />
        <Signal x={967} y={821} />
        <Signal x={1282} y={832} />
        <Signal x={960} y={830} up />
        <rect x="867" y="834" width="5" height="7" fill={C.red} />
        <rect x="988" y="783" width="1" height="60" fill={C.white} />
      </svg>
    </Plot>
    <Axis>
      <Ticks $h={37} $top={12}>
        <Tick>+2.05</Tick>
        <Tick>+1.32</Tick>
      </Ticks>
      <Ticks $h={16} $top={22}><Tick>+0</Tick></Ticks>
    </Axis>
  </Pane>
);

const IntradayWindow = () => (
  <Popup>
    <TitleBar>
      <TitleWord>格力电器(000651)</TitleWord>
      <TitleWord>2020-07-29</TitleWord>
      <TitleWord>星期三</TitleWord>
      <TitleHint>左右方向键切换分时</TitleHint>
      <WinKey aria-label="最小化"><svg width="10" height="10"><path d="M0 5.500h10" stroke="#888" /></svg></WinKey>
      <WinKey aria-label="最大化"><svg width="10" height="10"><path d="M.5.5h9v9h-9z" stroke="#888" fill="none" /></svg></WinKey>
      <WinKey aria-label="关闭"><svg width="11" height="11"><path d="M.5.5l10 10M10.500.5l-10 10" stroke="#888" /></svg></WinKey>
    </TitleBar>
    <InfoRow>
      <InfoText>
        <Tone $c={C.pale}>分时 均价: 59.29</Tone>
        <Tone $c={C.white}>最新: 59.37</Tone>
        <Tone $c={C.red}>涨停价:63.47</Tone>
      </InfoText>
      <InfoKey $w={58}>历史重现</InfoKey>
      <InfoKey $w={20} aria-label="返回"><JumpIcon back /></InfoKey>
    </InfoRow>
    <Trio $h={455}>
      <div>
        <Ticks $h={358} $right>{LEFT_PRICES.map((t, i) => <Tick key={i} $c={tickTone(i)}>{t}</Tick>)}</Ticks>
        <Ticks $h={72} $top={12} $right>{["6667", "4445", "2222"].map((t) => <Tick key={t} $c={C.cyan}>{t}</Tick>)}</Ticks>
      </div>
      <svg className="plot" viewBox="19 195 686 455" preserveAspectRatio="xMinYMin meet">
        <g fill={C.line} shapeRendering="crispEdges">
          {[195, ...PRICE_GRID].map((y) => <rect key={y} x="19" y={y} width="686" height="1" />)}
          <rect x="19" y="364" width="686" height="3" />
          <rect x="19" y="536" width="686" height="2" />
          <rect x="19" y="195" width="1" height="455" />
          <rect x="704" y="195" width="1" height="455" />
          <rect x="362" y="195" width="2" height="455" />
        </g>
        <Sticks ox={0} oy={500} base={649} raw={TRADES_A} />
        <Sticks ox={370} oy={520} base={649} raw={TRADES_B} />
        <Line c={C.pale} pts={MEAN} />
        <Line c={C.white} pts={PRICE} />
      </svg>
      <Ticks $h={358}>{RIGHT_RATES.map((t, i) => <Tick key={i} $c={tickTone(i)}>{t}</Tick>)}</Ticks>
    </Trio>
    <Legend>
      <LegendItem $c={C.white}>MACDFS(12,26,9)</LegendItem>
      <LegendItem $c={C.white}>DIFF: -0.049<Trend /></LegendItem>
      <LegendItem $c={C.yellow}>DEA: -0.044<Trend blue /></LegendItem>
      <LegendItem $c={C.green}>MACDFS: -0.009<Trend blue /></LegendItem>
    </Legend>
    <Trio $h={142}>
      <Ticks $h={129} $right>
        {["0.597", "0.429", "0.261", "0.086", "-0.082"].map((t, i) => <Tick key={t} $c={i < 4 ? C.red : C.green}>{t}</Tick>)}
      </Ticks>
      <svg className="plot" viewBox="19 670 686 142" preserveAspectRatio="xMinYMin meet">
        <g fill={C.line} shapeRendering="crispEdges">
          {[670, 698, 726, 755, 783, 812].map((y) => <rect key={y} x="19" y={y} width="686" height="1" />)}
          <rect x="19" y="650" width="1" height="165" />
          <rect x="704" y="650" width="1" height="166" />
          <rect x="362" y="670" width="2" height="146" />
          <rect x="19" y="768" width="686" height="1" fill="#c00000" />
        </g>
        <Sticks ox={0} oy={500} base={768} tone="r" raw={HOT_A} />
        <Sticks ox={370} oy={520} base={768} tone="r" raw={HOT_B} />
        <Sticks ox={0} oy={500} base={770} tone="g" raw={COLD_A} />
        <Sticks ox={370} oy={520} base={770} tone="g" raw={COLD_B} />
        <Line c={C.white} pts={DIFF} />
        <Line c={C.yellow} pts={DEA} />
      </svg>
    </Trio>
    <Hours>
      <span>09:30</span>
      <span>11:30</span>
      <span>15:00</span>
    </Hours>
    <IndexTabs>
      <IndexTab $on>MACDFS</IndexTab>
      <IndexTab>KDJFS</IndexTab>
      <IndexTab>RSIFS</IndexTab>
      <IndexTab>BOLLFS</IndexTab>
    </IndexTabs>
  </Popup>
);

const STATS: [string, string, string, string, string, string][] = [
  ["最新", "57.25", C.green, "开盘", "57.90", C.red],
  ["涨跌", "-0.45", C.green, "最高", "58.15", C.red],
  ["涨幅", "-0.78%", C.green, "最低", "57.01", C.green],
  ["振幅", "1.98%", C.cyan, "量比", "0.82", C.green],
  ["总手", "36.51万", C.cyan, "换手", "0.61%", C.cyan],
  ["金额", "21.08亿", C.cyan, "换手(实)", "0.96%", C.cyan],
  ["市盈(静)", "13.95", C.text, "市盈(动)", "22.11", C.text],
  ["总市值", "3444亿", C.cyan, "流通值", "3418亿", C.cyan],
  ["总股本", "60.16亿", C.cyan, "流通股", "59.70亿", C.cyan],
  ["涨停", "63.47", C.red, "跌停", "51.93", C.green],
  ["外盘", "18.35万", C.red, "内盘", "18.16万", C.green],
];

const Amount = ({ v, c }: { v: string; c: string }) => {
  const m = v.match(/^(.*?)([万亿]?)$/)!;
  return (
    <Figure $c={c}>
      {m[1]}
      {m[2] && <Unitary>{m[2]}</Unitary>}
    </Figure>
  );
};

const DEALS: [string, number, boolean][] = [
  ["57.22", 151, false], ["57.22", 203, false], ["57.25", 97, true], ["57.24", 158, false], ["57.24", 149, false],
  ["57.23", 69, false], ["57.24", 12, true], ["57.25", 48, true], ["57.24", 129, true], ["57.24", 35, true],
  ["57.24", 66, true], ["57.24", 51, true], ["57.23", 83, false], ["57.24", 258, true], ["57.24", 107, true],
];

const BookBlock = ({ side, rows }: { side: string; rows: [number, string][] }) => (
  <Book>
    <BookSide><span>{side}</span><span>盘</span></BookSide>
    <BookRows>
      {rows.map(([n, p]) => (
        <BookRow key={n}>
          <Figure>{n}</Figure>
          <Figure $c={C.green}>{p}</Figure>
        </BookRow>
      ))}
    </BookRows>
  </Book>
);

const QuoteSidebar = () => (
  <Side>
    <SideHead>
      <span>R</span>
      <StockName>格力电器 000651</StockName>
    </SideHead>
    <StatGrid $row={21}>
      <StatName>委比</StatName>
      <Figure $c={C.green}>-73.18%</Figure>
      <span />
      <Figure $c={C.green}>-112480</Figure>
    </StatGrid>
    <BookBlock side="卖" rows={[[5, "57.29"], [4, "57.28"], [3, "57.27"], [2, "57.26"], [1, "57.25"]]} />
    <BookBlock side="买" rows={[[1, "57.24"], [2, "57.23"], [3, "57.22"], [4, "57.21"], [5, "57.20"]]} />
    <StatGrid $row={18}>
      {STATS.map(([a, av, ac, b, bv, bc]) => (
        <React.Fragment key={a}>
          <StatName>{a}</StatName>
          <Amount v={av} c={ac} />
          <StatName $second>{b}</StatName>
          <Amount v={bv} c={bc} />
        </React.Fragment>
      ))}
    </StatGrid>
    <Sector>
      <span>白色家电</span>
      <SectorMove>-0.72%</SectorMove>
      <SectorPeers href="#peers">同行业比较</SectorPeers>
    </Sector>
    <DealTable>
      <colgroup><col width="57" /><col width="71" /><col width="66" /><col width="15" /></colgroup>
      <tbody>
        {DEALS.map(([p, n, up], i) => (
          <tr key={i}>
            <td>14:56</td>
            <td><Tone $c={C.green}>{p}</Tone></td>
            <td><Tone $c={up ? C.red : C.green}>{n}</Tone></td>
            <td><DealArrow up={up} /></td>
          </tr>
        ))}
      </tbody>
    </DealTable>
  </Side>
);

const InputBar = () => (
  <ImeBar>
    <ImeLogo>
      <svg width="30" height="30" viewBox="0 0 30 30">
        <path d="M3 4.500L23 1c2 0 3 .5 3.500 2.500L29 22c0 2-1 3-3 3.500L7 28c-2 0-3-1-3.500-3L1 8C1 6 1.500 5 3 4.500z" fill="#f45a1c" />
        <path d="M22 8.500c-5-2-14-1.500-14 2.300 0 4.200 14 2.500 14 6.700 0 4-9 4.500-14.500 2" fill="none" stroke="#fff" strokeWidth="3.600" strokeLinecap="round" />
      </svg>
    </ImeLogo>
    <ImeKey>中</ImeKey>
    <ImeKey aria-label="标点">
      <svg width="14" height="14" viewBox="0 0 14 14" fill="none" stroke="#1f73c8" strokeWidth="1.500">
        <circle cx="3.500" cy="5" r="2" />
        <path d="M11 6.500c1.500 2 .5 4-1.500 5" strokeWidth="2.500" />
      </svg>
    </ImeKey>
    <ImeKey aria-label="表情">
      <svg width="16" height="16" viewBox="0 0 16 16" fill="none" stroke="#1f73c8" strokeWidth="1.700">
        <circle cx="8" cy="8" r="6.900" />
        <path d="M4.500 9c1 3.500 6 3.500 7 0M5.700 4.500v2.500M10.300 4.500v2.500" />
      </svg>
    </ImeKey>
    <ImeKey aria-label="语音">
      <svg width="14" height="16" viewBox="0 0 14 16">
        <rect x="4" y="0" width="6" height="9" rx="3" fill="#1f73c8" />
        <path d="M1.500 6.500c0 7 11 7 11 0M7 12v3M3.500 15.200h7" fill="none" stroke="#1f73c8" strokeWidth="1.500" />
      </svg>
    </ImeKey>
    <ImeKey aria-label="软键盘">
      <svg width="16" height="12" viewBox="0 0 16 12" fill="none" stroke="#1f73c8" strokeWidth="1.500">
        <rect x=".8" y=".8" width="14.400" height="10.400" rx="1" />
        <path d="M3 4h10M3 6.500h10" strokeDasharray="1.500 1" />
        <path d="M4.500 9h7" />
      </svg>
    </ImeKey>
    <ImeKey aria-label="账号">
      <svg width="18" height="16" viewBox="0 0 18 16" fill="#b4bccc">
        <circle cx="7" cy="4" r="3.500" />
        <path d="M0 14c0-7 13-7 13-3v3z" />
        <path d="M8 9h9v6H8z" fill="#fff" stroke="#b4bccc" />
        <path d="M11 9v3M14 9v3" stroke="#b4bccc" />
      </svg>
    </ImeKey>
    <ImeKey aria-label="皮肤">
      <svg width="16" height="14" viewBox="0 0 16 14">
        <path d="M4.500 0C6 2 10 2 11.500 0L16 3l-1.800 4-2-1v8H3.800V6l-2 1L0 3z" fill="#1f73c8" />
      </svg>
    </ImeKey>
    <ImeKey aria-label="工具箱">
      <svg width="14" height="13" viewBox="0 0 14 13" fill="#1f73c8">
        <rect width="6.300" height="5.800" rx=".6" />
        <rect y="7.200" width="6.300" height="5.800" rx=".6" />
        <rect x="7.700" y="7.200" width="6.300" height="5.800" rx=".6" />
        <rect x="8.400" y=".7" width="4.900" height="4.400" fill="none" stroke="#1f73c8" strokeWidth="1.400" />
      </svg>
    </ImeKey>
  </ImeBar>
);

const Marks = () => (
  <Overlay width="1440" height="570" viewBox="0 0 1440 570" fill={C.mark} aria-hidden="true">
    <path d="M698 87l718 264.500.7-1.500L1430 364.500l-18 2.500 1-4L698 88.500z" />
    <path d="M163.300 257L171.300 272l-5-2.500L159.500 382h-1.500l-.7-112.500-4 1.500z" />
    <path d="M113.500 437h1.300L105 517.500l4.200-.2-10.500 14-7-17.300 4 2z" />
    <path d="M214.700 493.500h.8L219.300 541l4.700-1.500-8.500 16-8.500-16 4 1.500z" />
  </Overlay>
);

const SiteMark = () => (
  <Watermark width="140" height="52" viewBox="0 0 140 52" aria-label="拾荒网 10Huang.CN">
    <g stroke="#fff" strokeWidth="5" strokeLinejoin="round" fill="#fff">
      <path d="M5 9h13l-1 36H8l1-27-5-2z" />
      <ellipse cx="35" cy="26" rx="13" ry="19" />
    </g>
    <path d="M5 9h13l-1 36H8l1-27-5-2z" fill="#d40000" />
    <ellipse cx="35" cy="26" rx="10.500" ry="16.500" fill="#fff" stroke="#d40000" strokeWidth="5" />
    <g stroke="#d40000" strokeWidth="2.500" strokeLinecap="round" strokeDasharray="0.100 4.500" fill="none">
      <ellipse cx="35" cy="26" rx="7" ry="12" />
    </g>
    <circle cx="35" cy="26" r="4.500" fill="#d40000" />
    <circle cx="35" cy="26" r="1.300" fill="#fff" />
    <g stroke="#fff" strokeWidth="5" strokeLinejoin="round" paintOrder="stroke">
      <text x="60" y="24" fontSize="23" fill="#555">拾荒网</text>
      <text x="49" y="43" fontSize="18" fill="#d40000">Huang.CN</text>
    </g>
  </Watermark>
);

export default function App() {
  return (
    <Page>
      <GlobalStyle />
      <TopToolbar />
      <Body>
        <Main>
          <Menu />
          <Legend $cut>
            <LegendItem $c={C.yellow}>MA10: 58.10<Trend up /></LegendItem>
            <LegendItem $c={C.pink}>MA20: 58.70<Trend up /></LegendItem>
            <LegendItem $c={C.green}>MA30: 58.25<Trend up /></LegendItem>
            <LegendItem $c={C.cyan}>MA60: 57.50<Trend up /></LegendItem>
            <LegendItem $c={C.cream}>MA120: 56.67<Trend /></LegendItem>
            <LegendItem $c={C.teal}>MA250: 57.41<Trend up /></LegendItem>
          </Legend>
          <PricePane />
          <VolumePane />
          <MacdPane />
          <SiteMark />
          <IntradayWindow />
        </Main>
        <QuoteSidebar />
      </Body>
      <InputBar />
      <Marks />
    </Page>
  );
}
